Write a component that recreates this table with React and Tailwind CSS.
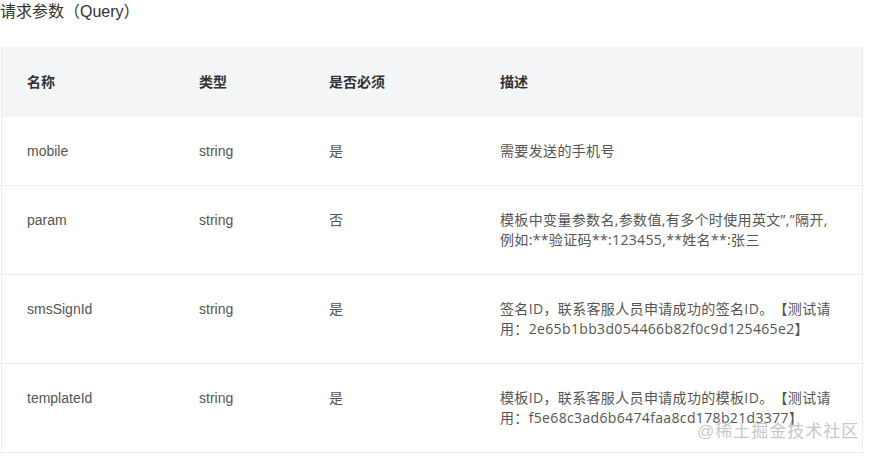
import React from "react";

const font = {
  fontFamily: '"Liberation Sans", Arial, "Noto Sans CJK SC", sans-serif',
};
const descFont = {
  fontFamily: '"Open Sans", "Noto Sans CJK SC", sans-serif',
};

const rows = [
  { name: "mobile", type: "string", req: "是", desc: ["需要发送的手机号"] },
  {
    name: "param",
    type: "string",
    req: "否",
    desc: [
      "模板中变量参数名,参数值,有多个时使用英文”,”隔开,",
      "例如:**验证码**:123455,**姓名**:张三",
    ],
  },
  {
    name: "smsSignId",
    type: "string",
    req: "是",
    desc: [
      "签名ID，联系客服人员申请成功的签名ID。【测试请",
      "用：2e65b1bb3d054466b82f0c9d125465e2】",
    ],
  },
  {
    name: "templateId",
    type: "string",
    req: "是",
    desc: [
      "模板ID，联系客服人员申请成功的模板ID。【测试请",
      "用：f5e68c3ad6b6474faa8cd178b21d3377】",
    ],
  },
];

export default function App() {
  return (
    <div
      className="relative w-[873px] h-[457px] bg-white overflow-hidden [text-spacing-trim:space-all]"
      style={font}
    >
      <div className="text-[16px] leading-[24px] text-[#333] h-[47px]">
        请求参数（Query）
      </div>
      <div className="ml-[1px] w-[862px] border-l border-r border-b border-[#ededed]">
        <div className="grid grid-cols-[172px_130px_171px_1fr] bg-[#f4f5f7] text-[14px] leading-[20px] font-bold text-[#333] h-[70px] items-center">
          <div className="pl-[25px]">名称</div>
          <div className="pl-[25px]">类型</div>
          <div className="pl-[25px]">是否必须</div>
          <div className="pl-[25px]">描述</div>
        </div>
        {rows.map((r, i) => (
          <div
            key={r.name}
            className={`grid grid-cols-[172px_130px_171px_1fr] text-[14px] leading-[20px] text-[#555] py-[24px] ${
              i > 0 ? "border-t border-[#ededed]" : ""
            }`}
          >
            <div className="pl-[25px]">{r.name}</div>
            <div className="pl-[25px]">{r.type}</div>
            <div className="pl-[25px]">{r.req}</div>
            <div
              className="pl-[25px] whitespace-nowrap tracking-[0.35px]"
              style={descFont}
            >
              {r.desc.map((d, j) => (
                <div key={j}>{d}</div>
              ))}
            </div>
          </div>
        ))}
      </div>
      <div
        className="absolute left-[697px] top-[420px] text-[17px] leading-[24px] tracking-[1px] text-[#c8c8c8] whitespace-nowrap"
        style={{ textShadow: "0 0 2px #fff" }}
      >
        @稀土掘金技术社区
      </div>
    </div>
  );
}
